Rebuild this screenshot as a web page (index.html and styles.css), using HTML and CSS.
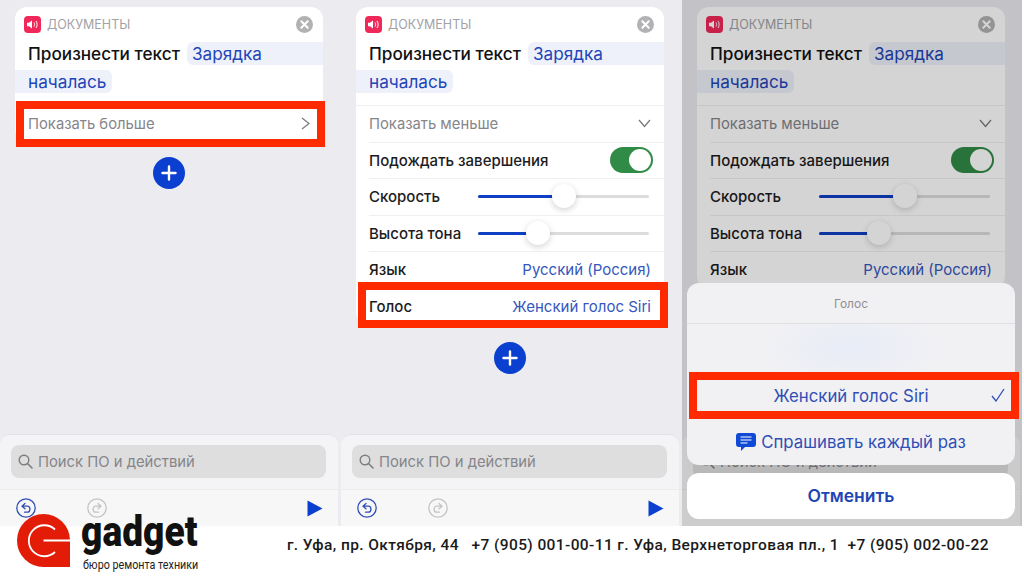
FILE: index.html
```html
<!DOCTYPE html>
<html lang="en">
<head>
  <meta charset="UTF-8">
  <meta name="viewport" content="width=device-width, initial-scale=1.0">
  <title>Произнести текст</title>
  <link rel="stylesheet" href="styles.css">
</head>
<body>
  <svg class="sprites" width="0" height="0">
    <symbol id="speaker" viewBox="0 0 17 17">
      <rect width="17" height="17" rx="4" fill="#f0285a"/>
      <path d="M3 6.8h2l3-2.3v8l-3-2.3H3z" fill="#fff"/>
      <path d="M10 6.5c.8 1.200.8 2.800 0 4M12 5c1.500 2.200 1.500 4.800 0 7" fill="none" stroke="#fff" stroke-width="1"/>
    </symbol>
    <symbol id="close" viewBox="0 0 17 17">
      <circle cx="8.500" cy="8.500" r="8.500" fill="#b2b2b4"/>
      <path d="M5.300 5.300l6.400 6.400M11.700 5.300l-6.400 6.400" stroke="#fff" stroke-width="2" stroke-linecap="round"/>
    </symbol>
    <symbol id="search" viewBox="0 0 15 15">
      <circle cx="6" cy="6" r="4.800" fill="none" stroke="#7d7d80" stroke-width="1.400"/>
      <path d="M9.500 9.500l4.500 4.500" stroke="#7d7d80" stroke-width="1.600" stroke-linecap="round"/>
    </symbol>
    <symbol id="undo" viewBox="0 0 20 20">
      <circle cx="10" cy="10" r="9.200" fill="none" stroke="currentColor" stroke-width="1.300"/>
      <path d="M9 5.500L6 8.200l3 2.600M6.300 8.200h5c3.500 0 3.500 6 0 6H8.500" fill="none" stroke="currentColor" stroke-width="1.300" stroke-linecap="round" stroke-linejoin="round"/>
    </symbol>
    <symbol id="redo" viewBox="0 0 20 20">
      <circle cx="10" cy="10" r="9.200" fill="none" stroke="currentColor" stroke-width="1.300"/>
      <path d="M11 5.500l3 2.700-3 2.600M13.700 8.200h-5c-3.500 0-3.500 6 0 6h2.800" fill="none" stroke="currentColor" stroke-width="1.300" stroke-linecap="round" stroke-linejoin="round"/>
    </symbol>
    <symbol id="plus" viewBox="0 0 32 32">
      <circle cx="16" cy="16" r="16" fill="#0b3fd0"/>
      <path d="M16 9.500v13M9.500 16h13" stroke="#fff" stroke-width="2.400" stroke-linecap="round"/>
    </symbol>
    <symbol id="play" viewBox="0 0 16 17">
      <path d="M.5.500L15.500 8.500.5 16.500z" fill="#0b3fd0"/>
    </symbol>
  </svg>

  <main class="shots">
    <!-- first screen -->
    <section class="phone">
      <div class="card">
        <div class="card-head">
          <svg class="app-icon"><use href="#speaker"/></svg>
          <span class="app-name">ДОКУМЕНТЫ</span>
          <svg class="close-icon"><use href="#close"/></svg>
        </div>
        <div class="phrase">
          <div class="phrase-line"><span class="phrase-label">Произнести текст</span><span class="pill pill-first">Зарядка</span></div>
          <div class="phrase-line"><span class="pill pill-last">началась</span></div>
        </div>
        <div class="row row-more">
          <span>Показать больше</span>
          <svg class="chevron" viewBox="0 0 9 13"><path d="M1 1l7 5.500-7 5.500" fill="none" stroke="#77777a" stroke-width="1.200"/></svg>
        </div>
      </div>
      <svg class="add-btn"><use href="#plus"/></svg>
      <div class="mark mark-more"></div>
      <div class="dock">
        <div class="dock-search">
          <div class="search-field"><svg class="search-icon"><use href="#search"/></svg>Поиск ПО и действий</div>
        </div>
        <div class="toolbar">
          <svg class="tool tool-undo"><use href="#undo"/></svg>
          <svg class="tool tool-redo"><use href="#redo"/></svg>
          <svg class="tool-play"><use href="#play"/></svg>
        </div>
      </div>
    </section>

    <!-- second screen -->
    <section class="phone">
      <div class="card card-full">
        <div class="card-head">
          <svg class="app-icon"><use href="#speaker"/></svg>
          <span class="app-name">ДОКУМЕНТЫ</span>
          <svg class="close-icon"><use href="#close"/></svg>
        </div>
        <div class="phrase">
          <div class="phrase-line"><span class="phrase-label">Произнести текст</span><span class="pill pill-first">Зарядка</span></div>
          <div class="phrase-line"><span class="pill pill-last">началась</span></div>
        </div>
        <div class="row row-more">
          <span>Показать меньше</span>
          <svg class="chevron-down" viewBox="0 0 13 9"><path d="M1 1l5.500 6.500L12 1" fill="none" stroke="#77777a" stroke-width="1.200"/></svg>
        </div>
        <div class="row"><span class="row-label">Подождать завершения</span><span class="toggle"><span class="knob"></span></span></div>
        <div class="row"><span class="row-label">Скорость</span><div class="slider"><div class="slider-fill" style="width: 50%"></div></div></div>
        <div class="row"><span class="row-label">Высота тона</span><div class="slider"><div class="slider-fill" style="width: 35%"></div></div></div>
        <div class="row"><span class="row-label">Язык</span><span class="row-value">Русский (Россия)</span></div>
        <div class="row"><span class="row-label">Голос</span><span class="row-value">Женский голос Siri</span></div>
      </div>
      <svg class="add-btn"><use href="#plus"/></svg>
      <div class="mark mark-voice"></div>
      <div class="dock">
        <div class="dock-search">
          <div class="search-field"><svg class="search-icon"><use href="#search"/></svg>Поиск ПО и действий</div>
        </div>
        <div class="toolbar">
          <svg class="tool tool-undo"><use href="#undo"/></svg>
          <svg class="tool tool-redo"><use href="#redo"/></svg>
          <svg class="tool-play"><use href="#play"/></svg>
        </div>
      </div>
    </section>

    <!-- third screen, dimmed with the sheet on top -->
    <section class="phone">
      <div class="card">
        <div class="card-head">
          <svg class="app-icon"><use href="#speaker"/></svg>
          <span class="app-name">ДОКУМЕНТЫ</span>
          <svg class="close-icon"><use href="#close"/></svg>
        </div>
        <div class="phrase">
          <div class="phrase-line"><span class="phrase-label">Произнести текст</span><span class="pill pill-first">Зарядка</span></div>
          <div class="phrase-line"><span class="pill pill-last">началась</span></div>
        </div>
        <div class="row row-more">
          <span>Показать меньше</span>
          <svg class="chevron-down" viewBox="0 0 13 9"><path d="M1 1l5.500 6.500L12 1" fill="none" stroke="#77777a" stroke-width="1.200"/></svg>
        </div>
        <div class="row"><span class="row-label">Подождать завершения</span><span class="toggle"><span class="knob"></span></span></div>
        <div class="row"><span class="row-label">Скорость</span><div class="slider"><div class="slider-fill" style="width: 50%"></div></div></div>
        <div class="row"><span class="row-label">Высота тона</span><div class="slider"><div class="slider-fill" style="width: 35%"></div></div></div>
        <div class="row"><span class="row-label">Язык</span><span class="row-value">Русский (Россия)</span></div>
      </div>
      <div class="dock">
        <div class="dock-search">
          <div class="search-field"><svg class="search-icon"><use href="#search"/></svg>Поиск ПО и действий</div>
        </div>
        <div class="toolbar"></div>
      </div>
      <div class="dim"></div>
      <div class="sheet">
        <div class="sheet-list">
          <div class="sheet-title">Голос</div>
          <div class="sheet-preview"></div>
          <div class="sheet-item sheet-selected">
            Женский голос Siri
            <svg class="check" viewBox="0 0 14 14"><path d="M1 8l4 5L13 1" fill="none" stroke="#2f4fb5" stroke-width="1.300"/></svg>
          </div>
          <div class="sheet-item">
            <svg class="bubble" viewBox="0 0 20 19"><path d="M3 0h14a3 3 0 0 1 3 3v8a3 3 0 0 1-3 3H9l-4 4v-4H3a3 3 0 0 1-3-3V3a3 3 0 0 1 3-3z" fill="#0f49d6"/><path d="M4.500 4h11M4.500 7h11M4.500 10h7" stroke="#fff" stroke-width="1.100"/></svg>
            Спрашивать каждый раз
          </div>
        </div>
        <div class="sheet-cancel">Отменить</div>
      </div>
      <div class="mark mark-sheet"></div>
    </section>
  </main>

  <footer class="footer">
    <div class="logo">
      <svg class="logo-mark" viewBox="0 0 53 53">
        <path d="M26.500 0a26.500 26.500 0 0 1 26.500 26.500V53H26.500a26.500 26.500 0 0 1 0-53z" fill="#e21c06"/>
        <path d="M38 15.500a15.500 15.500 0 1 0 0 22.500M26.500 26.500H53" fill="none" stroke="#fff" stroke-width="1.800"/>
      </svg>
      <div class="logo-text">
        <div class="logo-name">gadget</div>
        <div class="logo-sub">бюро ремонта техники</div>
      </div>
    </div>
    <p class="contacts">г. Уфа, пр. Октября, 44 &nbsp; +7 (905) 001-00-11 г. Уфа, Верхнеторговая пл., 1 &nbsp;+7 (905) 002-00-22</p>
  </footer>
</body>
</html>
```

FILE: styles.css
```css
* {
  box-sizing: border-box;
}

body {
  font-family: Inter, "Noto Sans", sans-serif;
  background-color: #fff;
  margin: 0;
  width: 1024px;
  height: 576px;
  overflow: hidden;
  position: relative;
  color: #111;
}

.sprites {
  position: absolute;
}

.shots {
  display: grid;
  grid-template-columns: 341px 341px 340px;
  height: 526px;
}

.phone {
  position: relative;
  display: flex;
  flex-direction: column;
  align-items: flex-start;
  background-color: #ebebf0;
  padding-top: 7px;
  overflow: hidden;
}

.card {
  width: 308px;
  margin-left: 15px;
  background-color: #fff;
  border-radius: 12px;
}

.card-full {
  margin-bottom: 3px;
}

.card-head {
  display: flex;
  align-items: center;
  height: 35px;
  padding: 0 10px 0 9px;
}

.app-icon {
  width: 17px;
  height: 17px;
}

.app-name {
  margin-left: 6px;
  font-size: 12.5px;
  color: #a2a2a6;
}

.close-icon {
  width: 17px;
  height: 17px;
  margin-left: auto;
}

.phrase {
  padding-bottom: 7px;
}

.phrase-line {
  display: flex;
  align-items: center;
  height: 23px;
  margin-bottom: 5px;
  font-size: 17.200px;
}

.phrase-label {
  margin-left: 13px;
  font-weight: 500;
}

.pill {
  height: 23px;
  line-height: 23px;
  color: #2245b8;
  background-color: #eef1fa;
}

.pill-first {
  flex: 1;
  margin-left: 7px;
  padding-left: 5px;
  border-radius: 6px 0 0 6px;
}

.pill-last {
  padding: 0 6px 0 13px;
  border-radius: 0 6px 6px 0;
}

.row {
  display: flex;
  align-items: center;
  justify-content: space-between;
  height: 36.500px;
  margin-left: 13px;
  padding-right: 13px;
  border-top: 1px solid #f0f0f2;
  font-size: 15px;
}

.row-label {
  font-weight: 500;
  color: #1c1c1e;
}

.row-more {
  margin-left: 0;
  padding-left: 13px;
  font-size: 14.800px;
  color: #85858a;
}

.chevron {
  width: 9px;
  height: 13px;
}

.chevron-down {
  width: 13px;
  height: 9px;
}

.row-value {
  color: #3557bd;
}

.toggle {
  display: flex;
  justify-content: flex-end;
  width: 43px;
  height: 26px;
  padding: 2px;
  margin-right: -2px;
  background-color: #2f8b45;
  border-radius: 13px;
}

.knob {
  width: 22px;
  height: 22px;
  background-color: #fff;
  border-radius: 50%;
}

.slider {
  position: relative;
  width: 171px;
  height: 3px;
  margin-right: 2px;
  background-color: #dcdcde;
  border-radius: 2px;
}

.slider-fill {
  position: relative;
  height: 3px;
  background-color: #0f3fc4;
  border-radius: 2px;
}

.slider-fill::after {
  content: "";
  position: absolute;
  right: -12px;
  top: -11px;
  width: 24px;
  height: 24px;
  background-color: #fff;
  border-radius: 50%;
  box-shadow: 0 2px 6px rgba(0, 0, 0, 0.18);
}

.add-btn {
  flex: none;
  width: 32px;
  height: 32px;
  margin: 15px 0 0 153px;
}

/* red marks drawn on the screenshot */
.mark {
  position: absolute;
  border: 8.500px solid #ff2a00;
}

.mark-more {
  left: 16px;
  top: 101px;
  width: 309px;
  height: 46px;
}

.mark-voice {
  left: 17px;
  top: 282px;
  width: 310px;
  height: 46px;
}

.mark-sheet {
  left: 7px;
  top: 372px;
  width: 330px;
  height: 47px;
}

.dock {
  position: absolute;
  left: 0;
  bottom: 0;
  width: 338px;
  height: 92px;
  background-color: #f7f7f8;
  border-radius: 10px 10px 0 0;
  border-top: 1px solid #e2e2e6;
}

.dock-search {
  height: 55px;
  padding: 10px 12px 0 11px;
  background-color: #f4f4f6;
  border-radius: 10px 10px 0 0;
  border-bottom: 1px solid #ececee;
}

.search-field {
  display: flex;
  align-items: center;
  height: 33px;
  padding-left: 7px;
  font-size: 14.800px;
  color: #85858a;
  background-color: #dededf;
  border-radius: 8px;
}

.search-icon {
  width: 15px;
  height: 15px;
  margin-right: 5px;
}

.toolbar {
  display: flex;
  align-items: center;
  height: 36px;
  padding: 0 15px 0 16px;
}

.tool {
  width: 20px;
  height: 20px;
}

.tool-undo {
  color: #2f4fb5;
}

.tool-redo {
  margin-left: 51px;
  color: #c4c4c6;
}

.tool-play {
  width: 16px;
  height: 17px;
  margin-left: auto;
}

.dim {
  position: absolute;
  inset: 0;
  background-color: rgba(0, 0, 0, 0.17);
}

.sheet {
  position: absolute;
  left: 5px;
  top: 283px;
  width: 328px;
  display: flex;
  flex-direction: column;
  gap: 8px;
}

.sheet-list {
  height: 182px;
  background-color: #f1f1f4;
  border-radius: 12px;
  overflow: hidden;
}

.sheet-title {
  height: 41px;
  line-height: 42px;
  text-align: center;
  font-size: 12px;
  color: #8f8f93;
  border-bottom: 1px solid #e0e0e4;
}

.sheet-preview {
  height: 48px;
  background: radial-gradient(ellipse 90px 40px at 50% 50%, #e8ecf7, transparent);
}

.sheet-item {
  position: relative;
  display: flex;
  align-items: center;
  justify-content: center;
  height: 46.500px;
  font-size: 16.800px;
  color: #2f4fb5;
}

.sheet-selected {
  height: 47px;
}

.check {
  position: absolute;
  right: 10px;
  top: 16px;
  width: 14px;
  height: 14px;
}

.bubble {
  width: 20px;
  height: 19px;
  margin-right: 5px;
}

.sheet-cancel {
  height: 46px;
  line-height: 46px;
  text-align: center;
  font-size: 17.500px;
  font-weight: 600;
  color: #1f45b5;
  background-color: #fff;
  border-radius: 12px;
}

.footer {
  display: flex;
  justify-content: flex-end;
  height: 50px;
  padding: 10px 35px 0 0;
}

/* the logo sticks up over the screenshots */
.logo {
  position: absolute;
  left: 17px;
  top: 514px;
  display: flex;
}

.logo-mark {
  width: 53px;
  height: 53px;
}

.logo-text {
  margin-left: 11px;
  width: 117px;
}

.logo-name {
  height: 44px;
  font-family: Roboto, sans-serif;
  font-size: 42px;
  font-weight: 900;
  line-height: 36px;
  color: #111;
  transform: scaleX(0.885);
  transform-origin: left;
}

.logo-sub {
  font-family: Roboto, sans-serif;
  font-size: 12.500px;
  line-height: 13px;
  color: #222;
  margin-left: 2px;
  white-space: nowrap;
  transform: scaleX(0.86);
  transform-origin: left;
}

.contacts {
  margin: 0;
  font-family: Roboto, sans-serif;
  font-size: 15.500px;
  font-weight: 500;
  color: #1a1a1a;
  letter-spacing: 0.39px;
  line-height: 18px;
  white-space: nowrap;
}
```
